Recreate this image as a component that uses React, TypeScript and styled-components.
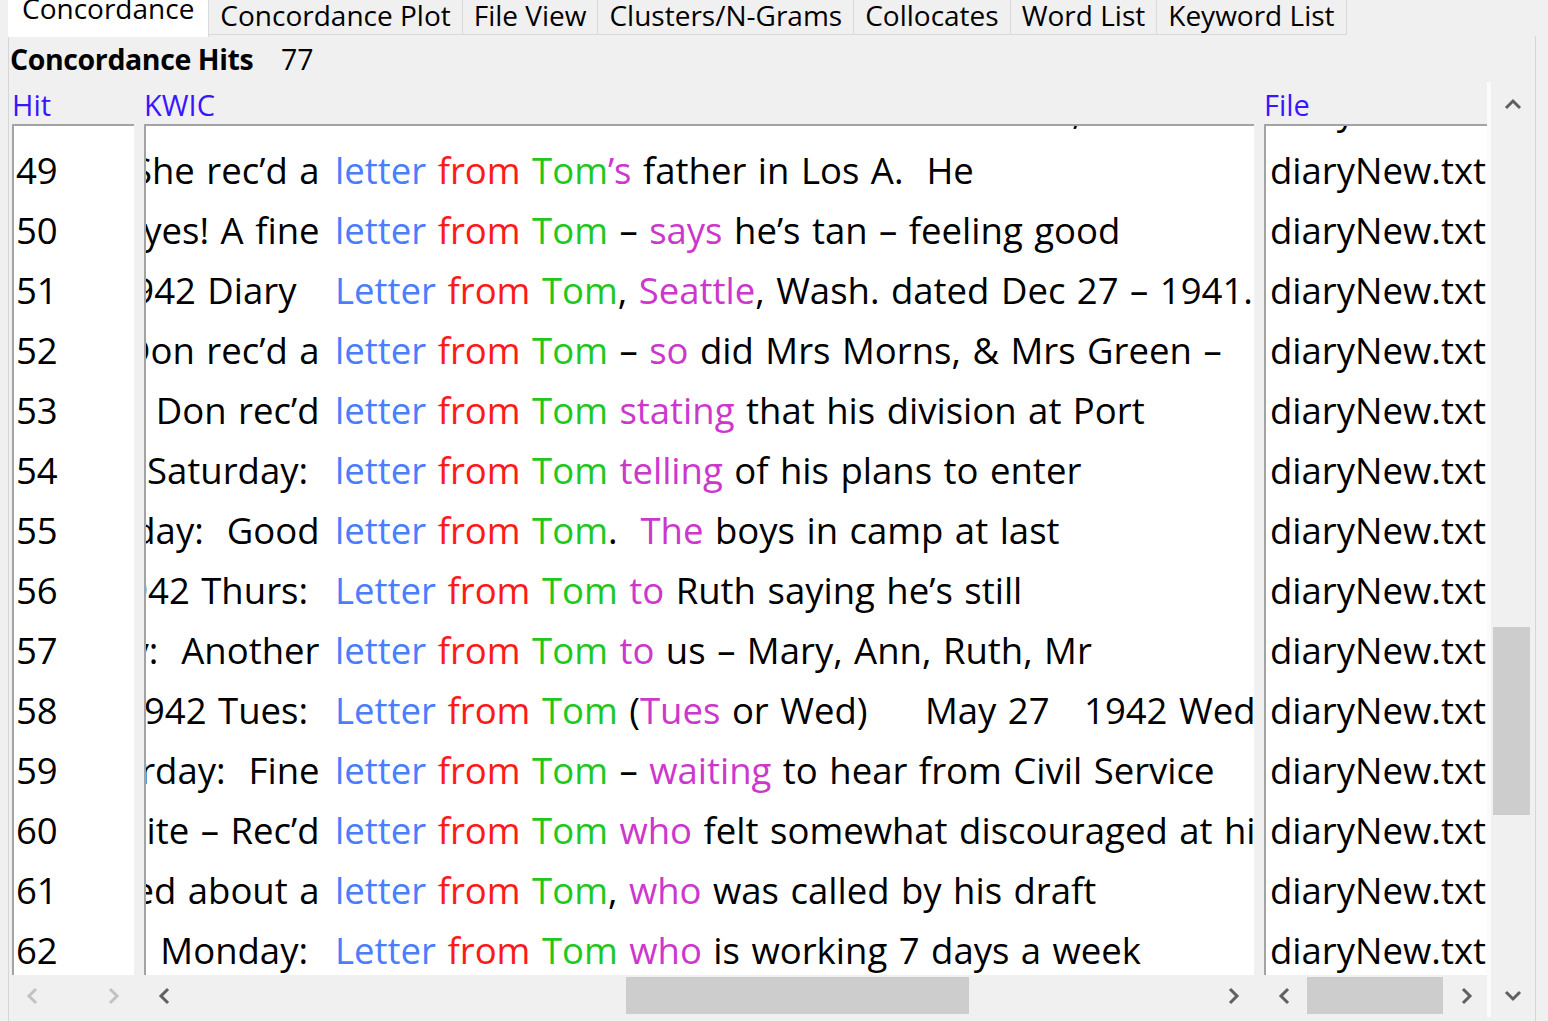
import React from "react";
import styled, { createGlobalStyle } from "styled-components";

const GlobalStyle = createGlobalStyle`
  html, body { margin: 0; padding: 0; background: #f0f0f0; overflow: hidden; }
  body { font-family: "Open Sans", "Noto Sans", sans-serif; color: #000; }
`;

const C = {
  black: "#000000",
  blue: "#4a7dff",
  red: "#ff1a1a",
  green: "#1ec81e",
  magenta: "#cc38cc",
  header: "#3a16ff",
};

const Window = styled.div`
  width: 1548px;
  height: 1021px;
  display: flex;
  flex-direction: column;
  background: #f0f0f0;
  overflow: hidden;
`;

const TabBar = styled.div`
  display: flex;
  height: 36px;
  padding-left: 8px;
  flex: 0 0 auto;
`;

const Tab = styled.div<{ $active?: boolean }>`
  height: ${(p) => (p.$active ? "37px" : "35px")};
  padding: 0 ${(p) => (p.$active ? "14px" : "11px")};
  background: ${(p) => (p.$active ? "#ffffff" : "#f0f0f0")};
  border-right: 1px solid #d9d9d9;
  border-bottom: ${(p) => (p.$active ? "none" : "1px solid #d9d9d9")};
  font-size: 28px;
  line-height: ${(p) => (p.$active ? "17px" : "30px")};
  white-space: nowrap;
  color: #000;
  box-sizing: border-box;
  z-index: ${(p) => (p.$active ? 1 : 0)};
`;

const Panel = styled.div`
  flex: 1 1 auto;
  margin-left: 8px;
  width: 1528px;
  box-sizing: border-box;
  border-left: 1px solid #d6d6d6;
  border-right: 1px solid #d6d6d6;
  padding-left: 1px;
  display: flex;
  flex-direction: column;
`;

const HitsLine = styled.div`
  height: 48px;
  line-height: 46px;
  font-size: 28.5px;
  display: flex;
  white-space: pre;
`;

const HitsLabel = styled.span`
  font-weight: 700;
  letter-spacing: -0.4px;
  width: 271px;
`;

const HitsCount = styled.span`
  font-weight: 400;
`;

const Body = styled.div`
  display: flex;
  padding-left: 2px;
  flex: 0 0 auto;
`;

const Columns = styled.div`
  display: flex;
  gap: 10px;
`;

const Column = styled.div<{ $w: number }>`
  width: ${(p) => p.$w}px;
  display: flex;
  flex-direction: column;
`;

const HeaderLabel = styled.div`
  height: 40px;
  line-height: 41px;
  font-size: 29px;
  color: ${C.header};
  white-space: nowrap;
`;

const ListBox = styled.div`
  height: 851px;
  background: #ffffff;
  border-top: 2px solid #a3a3a3;
  border-left: 2px solid #a3a3a3;
  box-sizing: border-box;
  overflow: hidden;
  font-size: 36.5px;
`;

const ListInner = styled.div<{ $offset: number }>`
  margin-top: ${(p) => -p.$offset}px;
`;

const Cell = styled.div<{ $pad: number }>`
  height: 60px;
  line-height: 60px;
  padding-left: ${(p) => p.$pad}px;
  white-space: pre;
  overflow: hidden;
`;

const KwicRow = styled.div`
  display: flex;
  height: 60px;
  line-height: 60px;
  white-space: pre;
  word-spacing: 2px;
`;

const LeftCtx = styled.div`
  flex: 0 0 185px;
  padding-right: 4px;
  display: flex;
  justify-content: flex-end;
  overflow: hidden;
`;

const LeftText = styled.span`
  flex: 0 0 auto;
`;

const RightCtx = styled.div`
  flex: 1 1 auto;
  overflow: hidden;
`;

const Seg = styled.span<{ $c: string }>`
  color: ${(p) => p.$c};
`;

const HScroll = styled.div`
  height: 42px;
  display: flex;
  align-items: stretch;
`;

const ArrowBtn = styled.div`
  flex: 0 0 40px;
  display: flex;
  align-items: center;
  justify-content: center;
`;

const HTrack = styled.div`
  flex: 1 1 auto;
  padding-top: 2px;
  padding-bottom: 3px;
  display: flex;
`;

const HThumb = styled.div`
  background: #cdcdcd;
  height: 100%;
`;

const VScroll = styled.div`
  width: 47px;
  box-sizing: border-box;
  border-left: 4px solid #fafafa;
  background: #f0f0f0;
  display: flex;
  flex-direction: column;
  margin-top: -2px;
`;

const VArrow = styled.div`
  height: 44px;
  display: flex;
  align-items: center;
  justify-content: center;
`;

const VTrack = styled.div`
  flex: 1 1 auto;
  padding-left: 2px;
  padding-right: 4px;
`;

const VThumb = styled.div`
  background: #cdcdcd;
  width: 100%;
`;

type Dir = "up" | "down" | "left" | "right";

const Chevron = ({ dir, color }: { dir: Dir; color: string }) => {
  const horiz = dir === "left" || dir === "right";
  const d: Record<Dir, string> = {
    left: "M10 2 L3 9 L10 16",
    right: "M2 2 L9 9 L2 16",
    up: "M2 10 L9 3 L16 10",
    down: "M2 3 L9 10 L16 3",
  };
  return (
    <svg
      width={horiz ? 12 : 18}
      height={horiz ? 18 : 13}
      viewBox={horiz ? "0 0 12 18" : "0 0 18 13"}
    >
      <path d={d[dir]} fill="none" stroke={color} strokeWidth={3} strokeLinejoin="miter" />
    </svg>
  );
};

type Row = { n: number; left: string; right: string };

const rows: Row[] = [
  { n: 48, left: "Wed. Ruth had a ", right: "[b:letter] [r:from] [g:Tom] [m:that] said the mail was late, he had been ill, and busy" },
  { n: 49, left: "Bess. She rec’d a ", right: "[b:letter] [r:from] [g:Tom][m:’s] father in Los A.  He" },
  { n: 50, left: "Tom – yes! A fine ", right: "[b:letter] [r:from] [g:Tom] – [m:says] he’s tan – feeling good" },
  { n: 51, left: "Jan 1 1942 Diary   ", right: "[b:Letter] [r:from] [g:Tom], [m:Seattle], Wash. dated Dec 27 – 1941." },
  { n: 52, left: "Jan. 3 Don rec’d a ", right: "[b:letter] [r:from] [g:Tom] – [m:so] did Mrs Morns, & Mrs Green –" },
  { n: 53, left: "                    Don rec’d ", right: "[b:letter] [r:from] [g:Tom] [m:stating] that his division at Port" },
  { n: 54, left: "                Saturday:  ", right: "[b:letter] [r:from] [g:Tom] [m:telling] of his plans to enter" },
  { n: 55, left: "Sunday:  Good ", right: "[b:letter] [r:from] [g:Tom].  [m:The] boys in camp at last" },
  { n: 56, left: "Mar 5 1942 Thurs:  ", right: "[b:Letter] [r:from] [g:Tom] [m:to] Ruth saying he’s still" },
  { n: 57, left: "Sunday:  Another ", right: "[b:letter] [r:from] [g:Tom] [m:to] us – Mary, Ann, Ruth, Mr" },
  { n: 58, left: "May 26 1942 Tues:  ", right: "[b:Letter] [r:from] [g:Tom] ([m:Tues] or Wed)     May 27   1942 Wed" },
  { n: 59, left: "Saturday:  Fine ", right: "[b:letter] [r:from] [g:Tom] – [m:waiting] to hear from Civil Service" },
  { n: 60, left: "white – Rec’d ", right: "[b:letter] [r:from] [g:Tom] [m:who] felt somewhat discouraged at his" },
  { n: 61, left: "worried about a ", right: "[b:letter] [r:from] [g:Tom], [m:who] was called by his draft" },
  { n: 62, left: "                 Monday:  ", right: "[b:Letter] [r:from] [g:Tom] [m:who] is working 7 days a week" },
];

const colorOf: Record<string, string> = { b: C.blue, r: C.red, g: C.green, m: C.magenta };

function parse(s: string): { t: string; c: string }[] {
  const out: { t: string; c: string }[] = [];
  const re = /\[(\w):([^\]]*)\]/g;
  let last = 0;
  let m: RegExpExecArray | null;
  while ((m = re.exec(s))) {
    if (m.index > last) out.push({ t: s.slice(last, m.index), c: C.black });
    out.push({ t: m[2], c: colorOf[m[1]] });
    last = m.index + m[0].length;
  }
  if (last < s.length) out.push({ t: s.slice(last), c: C.black });
  return out;
}

const tabs = ["Concordance", "Concordance Plot", "File View", "Clusters/N-Grams", "Collocates", "Word List", "Keyword List"];

const SCROLL_OFFSET = 46;

const HBar = ({ enabled, thumbLeft, thumbWidth }: { enabled: boolean; thumbLeft?: number; thumbWidth?: number }) => {
  const col = enabled ? "#606060" : "#c2c2c2";
  return (
    <HScroll>
      <ArrowBtn>
        <Chevron dir="left" color={col} />
      </ArrowBtn>
      <HTrack>
        {enabled && thumbWidth ? (
          <HThumb style={{ marginLeft: thumbLeft, width: thumbWidth }} />
        ) : null}
      </HTrack>
      <ArrowBtn>
        <Chevron dir="right" color={col} />
      </ArrowBtn>
    </HScroll>
  );
};

export default function App() {
  return (
    <Window>
      <GlobalStyle />
      <TabBar>
        {tabs.map((t, i) => (
          <Tab key={t} $active={i === 0}>
            {t}
          </Tab>
        ))}
      </TabBar>
      <Panel>
        <HitsLine>
          <HitsLabel>Concordance Hits</HitsLabel>
          <HitsCount>77</HitsCount>
        </HitsLine>
        <Body>
          <Columns>
            <Column $w={122}>
              <HeaderLabel>Hit</HeaderLabel>
              <ListBox>
                <ListInner $offset={SCROLL_OFFSET}>
                  {rows.map((r) => (
                    <Cell key={r.n} $pad={2}>
                      {r.n}
                    </Cell>
                  ))}
                </ListInner>
              </ListBox>
              <HBar enabled={false} />
            </Column>
            <Column $w={1110}>
              <HeaderLabel>KWIC</HeaderLabel>
              <ListBox>
                <ListInner $offset={SCROLL_OFFSET}>
                  {rows.map((r) => (
                    <KwicRow key={r.n}>
                      <LeftCtx>
                        <LeftText>{r.left}</LeftText>
                      </LeftCtx>
                      <RightCtx>
                        {parse(r.right).map((s, i) => (
                          <Seg key={i} $c={s.c}>
                            {s.t}
                          </Seg>
                        ))}
                      </RightCtx>
                    </KwicRow>
                  ))}
                </ListInner>
              </ListBox>
              <HBar enabled thumbLeft={442} thumbWidth={343} />
            </Column>
            <Column $w={223}>
              <HeaderLabel>File</HeaderLabel>
              <ListBox>
                <ListInner $offset={SCROLL_OFFSET}>
                  {rows.map((r) => (
                    <Cell key={r.n} $pad={4}>
                      diaryNew.txt
                    </Cell>
                  ))}
                </ListInner>
              </ListBox>
              <HBar enabled thumbLeft={3} thumbWidth={136} />
            </Column>
          </Columns>
          <VScroll>
            <VArrow>
              <Chevron dir="up" color="#606060" />
            </VArrow>
            <VTrack>
              <VThumb style={{ marginTop: 501, height: 188 }} />
            </VTrack>
            <VArrow>
              <Chevron dir="down" color="#606060" />
            </VArrow>
          </VScroll>
        </Body>
      </Panel>
    </Window>
  );
}
